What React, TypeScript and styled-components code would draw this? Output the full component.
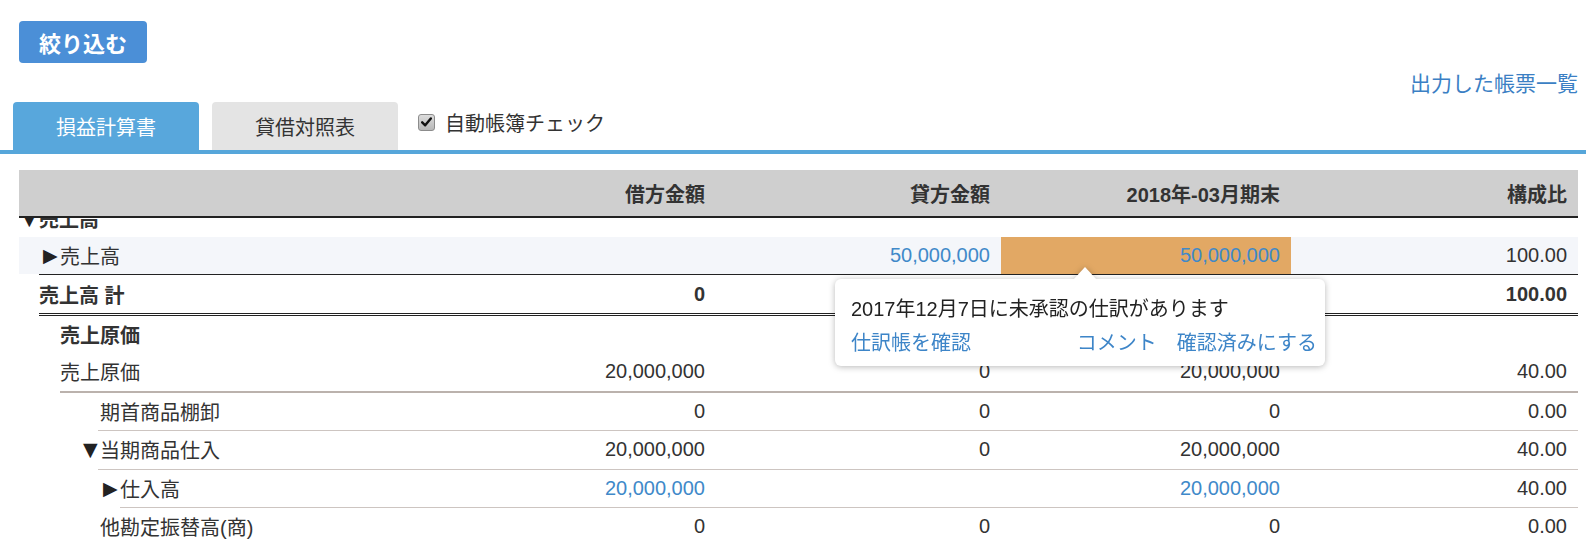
import React from 'react';
import styled, { createGlobalStyle, css } from 'styled-components';

const GlobalStyle = createGlobalStyle`
  html, body { margin: 0; padding: 0; background: #fff; }
  body {
    font-family: "Liberation Sans", "Noto Sans CJK JP", sans-serif;
    color: #333;
    font-size: 20px;
  }
`;

const COLS = '1fr 285px 285px 290px 287px';

const Page = styled.div`
  width: 1586px;
  height: 539px;
  overflow: hidden;
  padding-top: 21px;
  box-sizing: border-box;
`;

const FilterButton = styled.button`
  margin-left: 19px;
  width: 128px;
  height: 42px;
  border: none;
  border-radius: 4px;
  background: #4b8fd7;
  color: #fff;
  font: bold 22px "Noto Sans CJK JP", sans-serif;
  padding: 0;
  display: flex;
  align-items: center;
  justify-content: center;
`;

const LinkRow = styled.div`
  display: flex;
  justify-content: flex-end;
  margin-top: 9px;
  padding-right: 8px;
  line-height: 24px;
`;

const ReportLink = styled.a`
  font-size: 21px;
  color: #3b7fc4;
  text-decoration: none;
`;

const TabBar = styled.div`
  margin-top: 6px;
  display: flex;
  padding-left: 13px;
  gap: 13px;
  border-bottom: 4px solid #56a6da;
`;

const Tab = styled.div<{ $active?: boolean }>`
  width: 186px;
  height: 48px;
  border-radius: 4px 4px 0 0;
  display: flex;
  align-items: center;
  justify-content: center;
  font-size: 20px;
  ${(p) =>
    p.$active
      ? css`
          background: #58a7dc;
          color: #fff;
        `
      : css`
          background: #e4e4e4;
          color: #333;
        `}
`;

const CheckLabel = styled.label`
  align-self: flex-start;
  margin-top: 10px;
  margin-left: 7px;
  display: flex;
  align-items: center;
  gap: 10px;
  height: 20px;
  font-size: 20px;
  color: #333;
`;

const CheckBox = styled.span`
  width: 17px;
  height: 17px;
  box-sizing: border-box;
  border: 1px solid #8c8c8c;
  border-radius: 3px;
  background: linear-gradient(#dcdcdc, #b8b8b8);
  display: flex;
  align-items: center;
  justify-content: center;
`;

const TableWrap = styled.div`
  margin: 16px 8px 0 19px;
`;

const HeaderRow = styled.div`
  display: grid;
  grid-template-columns: ${COLS};
  height: 46px;
  background: #cfcfcf;
  border-bottom: 2px solid #222;
  font-weight: bold;
`;

const HeadCell = styled.div`
  display: flex;
  align-items: center;
  justify-content: flex-end;
  padding-right: 11px;
  white-space: nowrap;
`;

const Body = styled.div`
  overflow: hidden;
  height: 330px;
`;

const ScrollContent = styled.div`
  margin-top: -18px;
`;

type BorderKind = 'none' | 'thin' | 'thick' | 'total';

const Row = styled.div<{ $indent: number; $h: number; $border: BorderKind; $highlight?: boolean; $bold?: boolean }>`
  display: grid;
  grid-template-columns: ${COLS};
  margin-left: ${(p) => p.$indent}px;
  height: ${(p) => p.$h}px;
  font-weight: ${(p) => (p.$bold ? 'bold' : 'normal')};
  background: ${(p) => (p.$highlight ? '#f4f6fa' : 'transparent')};
  ${(p) => p.$border === 'thin' && css`border-bottom: 1px solid #cdc5c1;`}
  ${(p) => p.$border === 'thick' && css`border-bottom: 2px solid #bbb2ad;`}
  ${(p) =>
    p.$border === 'total' &&
    css`
      border-top: 1px solid #222;
      border-bottom: 3px double #222;
    `}
`;

const Label = styled.div<{ $pad: number }>`
  display: flex;
  align-items: center;
  padding-left: ${(p) => p.$pad}px;
  white-space: nowrap;
`;

const Marker = styled.span`
  display: inline-block;
  width: 17px;
  margin-left: -17px;
  font-family: "DejaVu Sans", sans-serif;
  font-size: 19px;
  line-height: 1;
  color: #222;
`;

const Num = styled.div<{ $link?: boolean; $flag?: boolean }>`
  position: relative;
  display: flex;
  align-items: center;
  justify-content: flex-end;
  padding-right: 11px;
  white-space: nowrap;
  color: ${(p) => (p.$link ? '#4089c9' : '#333')};
  background: ${(p) => (p.$flag ? '#e2a864' : 'transparent')};
`;

const Popover = styled.div`
  position: absolute;
  top: calc(100% + 5px);
  left: -166px;
  width: 490px;
  height: 87px;
  box-sizing: border-box;
  background: #fff;
  border-radius: 6px;
  filter: drop-shadow(0 1px 3px rgba(0, 0, 0, 0.28));
  padding: 16px 8px 9px 16px;
  z-index: 5;
  color: #222;
  font-weight: normal;
  display: flex;
  flex-direction: column;
  gap: 6px;
  &::before {
    content: '';
    position: absolute;
    left: 238px;
    top: -12px;
    border-left: 12px solid transparent;
    border-right: 12px solid transparent;
    border-bottom: 13px solid #fff;
  }
`;

const PopText = styled.div`
  line-height: 28px;
  white-space: nowrap;
`;

const PopLinks = styled.div`
  display: flex;
  justify-content: space-between;
  line-height: 28px;
`;

const PopLinkGroup = styled.div`
  display: flex;
  gap: 20px;
`;

const PopLink = styled.a`
  color: #3d85c8;
  text-decoration: none;
  white-space: nowrap;
`;

type RowData = {
  label: string;
  marker?: string;
  indent: number;
  pad: number;
  h: number;
  border: BorderKind;
  bold?: boolean;
  highlight?: boolean;
  vals: { v: string; link?: boolean; flag?: boolean }[];
};

const rows: RowData[] = [
  { label: '売上高', marker: '▼', indent: 0, pad: 20, h: 37, border: 'none', bold: true, vals: [{ v: '' }, { v: '' }, { v: '' }, { v: '' }] },
  {
    label: '売上高',
    marker: '▶',
    indent: 0,
    pad: 41,
    h: 37,
    border: 'none',
    highlight: true,
    vals: [{ v: '' }, { v: '50,000,000', link: true }, { v: '50,000,000', link: true, flag: true }, { v: '100.00' }],
  },
  { label: '売上高 計', indent: 20, pad: 0, h: 38, border: 'total', bold: true, vals: [{ v: '0' }, { v: '' }, { v: '' }, { v: '100.00' }] },
  { label: '売上原価', indent: 41, pad: 0, h: 37, border: 'none', bold: true, vals: [{ v: '' }, { v: '' }, { v: '' }, { v: '' }] },
  { label: '売上原価', indent: 41, pad: 0, h: 37.5, border: 'thick', vals: [{ v: '20,000,000' }, { v: '0' }, { v: '20,000,000' }, { v: '40.00' }] },
  { label: '期首商品棚卸', indent: 79, pad: 2, h: 37.5, border: 'thin', vals: [{ v: '0' }, { v: '0' }, { v: '0' }, { v: '0.00' }] },
  { label: '当期商品仕入', marker: '▼', indent: 79, pad: 2, h: 37.5, border: 'thin', vals: [{ v: '20,000,000' }, { v: '0' }, { v: '20,000,000' }, { v: '40.00' }] },
  { label: '仕入高', marker: '▶', indent: 101, pad: 0, h: 37.5, border: 'thin', vals: [{ v: '20,000,000', link: true }, { v: '' }, { v: '20,000,000', link: true }, { v: '40.00' }] },
  { label: '他勘定振替高(商)', indent: 79, pad: 2, h: 37.5, border: 'thin', vals: [{ v: '0' }, { v: '0' }, { v: '0' }, { v: '0.00' }] },
];

export default function App() {
  return (
    <Page>
      <GlobalStyle />
      <FilterButton>絞り込む</FilterButton>
      <LinkRow>
        <ReportLink href="#">出力した帳票一覧</ReportLink>
      </LinkRow>
      <TabBar>
        <Tab $active>損益計算書</Tab>
        <Tab>貸借対照表</Tab>
        <CheckLabel>
          <CheckBox>
            <svg width="11" height="10" viewBox="0 0 11 10">
              <path d="M1.2 5.3 L4.2 8.3 L9.8 1.4" fill="none" stroke="#111" strokeWidth="2.4" strokeLinecap="round" strokeLinejoin="round" />
            </svg>
          </CheckBox>
          自動帳簿チェック
        </CheckLabel>
      </TabBar>
      <TableWrap>
        <HeaderRow>
          <HeadCell />
          <HeadCell>借方金額</HeadCell>
          <HeadCell>貸方金額</HeadCell>
          <HeadCell>2018年-03月期末</HeadCell>
          <HeadCell>構成比</HeadCell>
        </HeaderRow>
        <Body>
          <ScrollContent>
            {rows.map((r, i) => (
              <Row key={i} $indent={r.indent} $h={r.h} $border={r.border} $bold={r.bold} $highlight={r.highlight}>
                <Label $pad={r.pad}>
                  {r.marker && <Marker>{r.marker}</Marker>}
                  {r.label}
                </Label>
                {r.vals.map((c, j) => (
                  <Num key={j} $link={c.link} $flag={c.flag}>
                    {c.v}
                    {c.flag && (
                      <Popover>
                        <PopText>2017年12月7日に未承認の仕訳があります</PopText>
                        <PopLinks>
                          <PopLink href="#">仕訳帳を確認</PopLink>
                          <PopLinkGroup>
                            <PopLink href="#">コメント</PopLink>
                            <PopLink href="#">確認済みにする</PopLink>
                          </PopLinkGroup>
                        </PopLinks>
                      </Popover>
                    )}
                  </Num>
                ))}
              </Row>
            ))}
          </ScrollContent>
        </Body>
      </TableWrap>
    </Page>
  );
}
